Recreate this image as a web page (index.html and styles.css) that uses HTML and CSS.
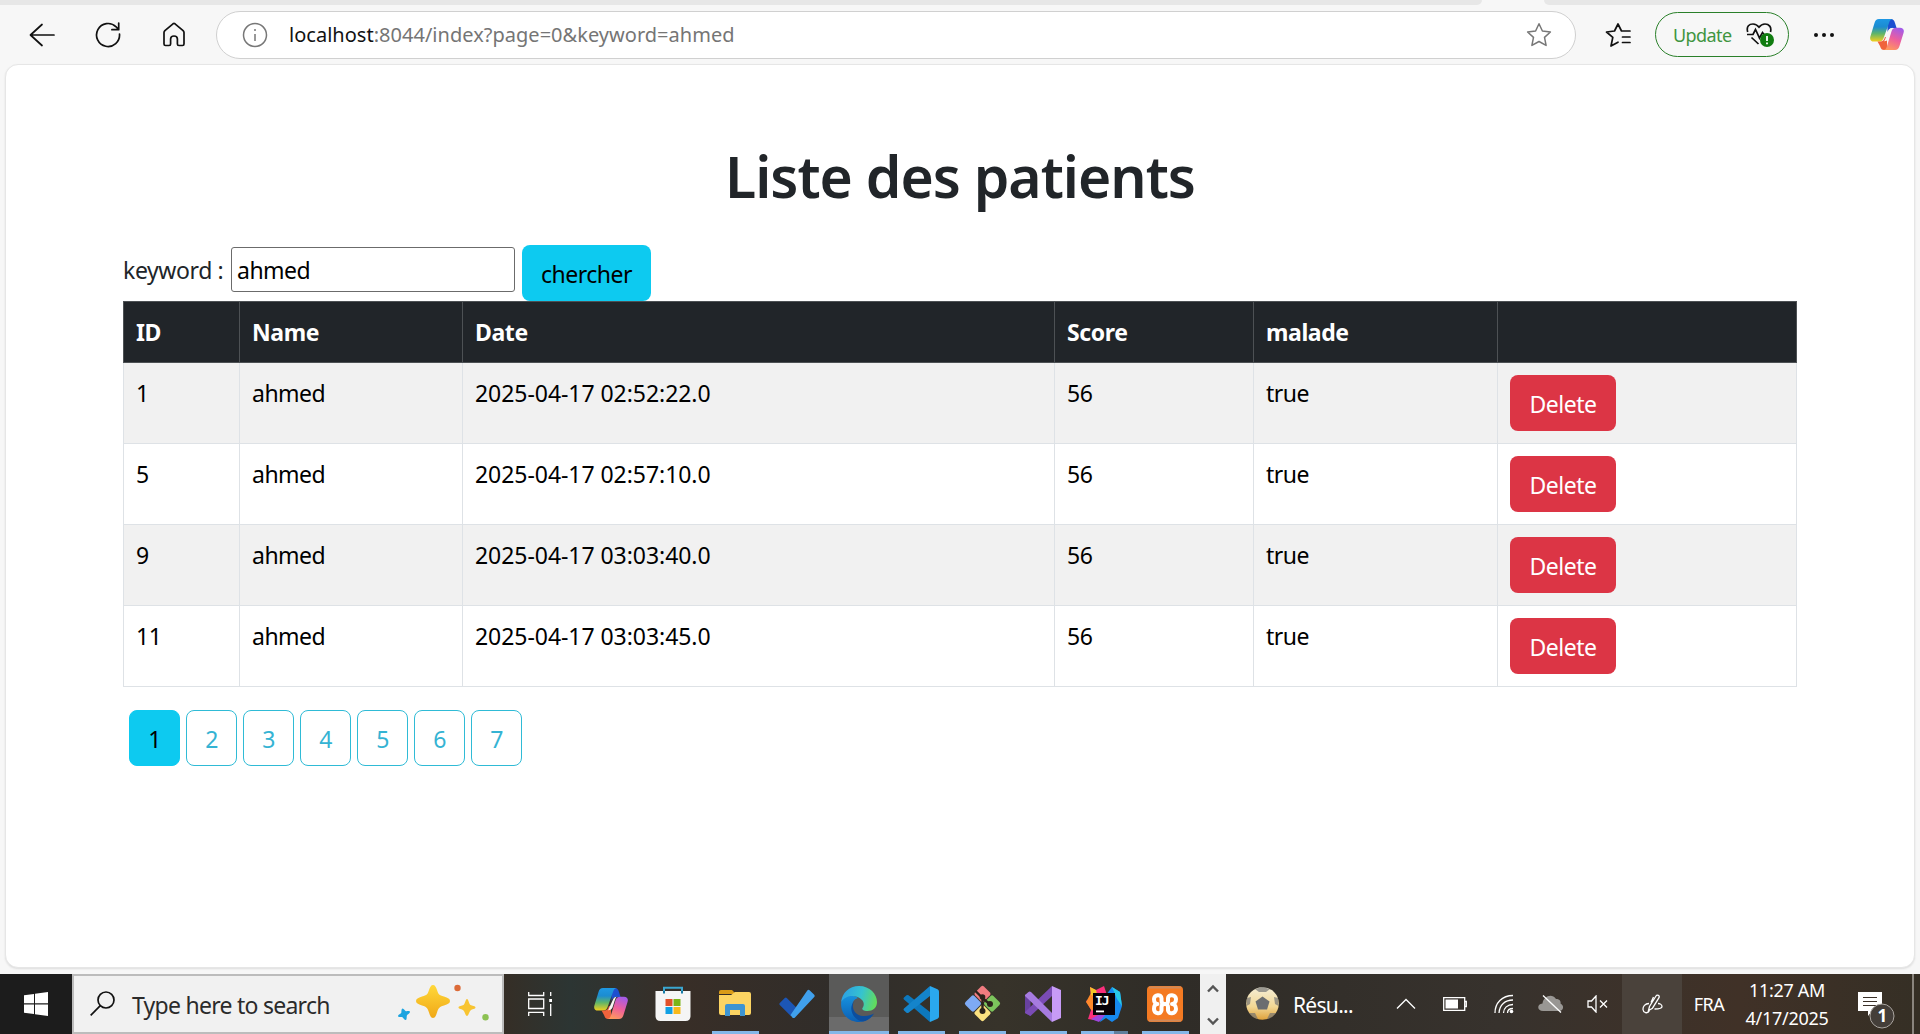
FILE: index.html
```html
<!DOCTYPE html>
<html lang="fr">
<head>
<meta charset="utf-8">
<title>Liste des patients</title>
<link rel="stylesheet" href="styles.css">
</head>
<body>
<svg class="defs" width="0" height="0" aria-hidden="true">
  <defs>
    <linearGradient id="cpBlue" x1="0" y1="0" x2="0" y2="1"><stop offset="0" stop-color="#1e98e4"/><stop offset=".35" stop-color="#1c8cd0"/><stop offset=".65" stop-color="#5fb56a"/><stop offset="1" stop-color="#f2cf1d"/></linearGradient>
    <linearGradient id="cpPink" x1=".7" y1="0" x2=".3" y2="1"><stop offset="0" stop-color="#a45be8"/><stop offset=".5" stop-color="#ee5f9c"/><stop offset="1" stop-color="#ff9a5c"/></linearGradient>
    <linearGradient id="gold" x1="0" y1="0" x2="0" y2="1"><stop offset="0" stop-color="#ffd83a"/><stop offset="1" stop-color="#f0a817"/></linearGradient>
    <linearGradient id="edgeTop" x1="0" y1=".3" x2="1" y2=".5"><stop offset="0" stop-color="#2b9fe6"/><stop offset=".55" stop-color="#36c3cf"/><stop offset="1" stop-color="#62dc5c"/></linearGradient>
    <linearGradient id="edgeLow" x1="0" y1="0" x2="0" y2="1"><stop offset="0" stop-color="#1792df"/><stop offset="1" stop-color="#0b5fb4"/></linearGradient>
    <linearGradient id="ballFill" x1="0" y1="0" x2="0" y2="1"><stop offset="0" stop-color="#f5eed6"/><stop offset=".6" stop-color="#f2d794"/><stop offset="1" stop-color="#dfa23c"/></linearGradient>
    <symbol id="copilot" viewBox="0 0 34 31">
      <path fill="#1d4fd0" d="M17 0h4c2 0 3 1 4 4l1.600 5h-4c-3 0-4 1-5 4z"/>
      <path fill="url(#cpBlue)" d="M9 0h14c-2 0-3 1-4 4l-5 14c-1 3-2 4.500-5 4.500H4c-3 0-4.500-2-3.600-5L4.500 4C5.300 1.500 6.500 0 9 0z"/>
      <path fill="#f0633c" d="M7.500 22.500H10c3 0 4-1.500 5-4.500l2 0v13h-3c-2 0-3-1-4-4z"/>
      <path fill="url(#cpPink)" d="M25 31H13c2 0 3.200-1 4-4l4.300-14c.9-3 2-4.300 5-4.300H30c3 0 4.500 2 3.600 5L29.500 27c-.8 2.500-2 4-4.500 4z"/>
      <path fill="#f8f5f4" d="M19.500 10.500q1-1.500 3-1.700-1 1-1.800 3.700l-2.200 7q-.8 2.500-4.500 2.700 1-1 1.800-3.700z"/>
    </symbol>
  </defs>
</svg>

<div class="screen">
  <div class="tabstrip"><span class="tab-left"></span><span class="tab-right"></span></div>

  <header class="toolbar">
    <svg class="nav-icon" width="26" height="26" viewBox="0 0 26 26"><path d="M25 13H1.500M13 2.500 1.500 13 13 23.500"/></svg>
    <svg class="nav-icon" width="26" height="26" viewBox="0 0 26 26"><path d="M24.500 12a11.500 11.500 0 1 1-3.400-7.200l2.400 2.700M23.700 1v6.700h-6.800"/></svg>
    <svg class="nav-icon" width="26" height="26" viewBox="0 0 26 26"><path d="M3 10.500c0-.8.300-1.300.9-1.900L12 1.800c.7-.5 1.300-.5 2 0l8.100 6.800c.6.600.9 1.100.9 1.900V22c0 1-.5 1.500-1.500 1.500h-3.600c-1 0-1.500-.500-1.500-1.500v-5c0-2-1-3-3.400-3s-3.400 1-3.400 3v5c0 1-.5 1.500-1.500 1.500H4.500C3.500 23.500 3 23 3 22z"/></svg>
    <div class="address">
      <svg class="info" width="26" height="26" viewBox="0 0 26 26"><circle cx="13" cy="13" r="11.500"/><path d="M13 12v7M13 7v2"/></svg>
      <span class="url"><b>localhost</b>:8044/index?page=0&amp;keyword=ahmed</span>
      <svg class="star" width="26" height="26" viewBox="0 0 26 26"><path d="M13 1.800 16.400 9l8 1-5.900 5.400 1.600 8L13 19.500l-7.100 3.900 1.600-8L1.600 10l8-1z"/></svg>
    </div>
    <svg class="nav-icon favs" width="26" height="26" viewBox="0 0 26 26"><path d="M13 20.200 6 24l1.800-8.700L1.500 10l8-1L13 2l3.500 7H25M17.500 15H25M17.500 20.500H25"/></svg>
    <button class="update">Update
      <svg width="29" height="26" viewBox="0 0 29 26"><g fill="none" stroke="#111" stroke-width="1.700"><path d="M1.700 10C0 4 3.500 2 7 2c2.500 0 4.500 1.200 6 3.200C14.500 3.200 16.500 2 19 2c4 0 6.800 3 5.500 8M1 12.500h6l2.500-5 4 8.500 3-5.500 1.500 2M5.500 15.500l7 6.500"/></g><circle cx="21" cy="18" r="7" fill="#107c10"/><path d="M21 14v5M21 20.500v1.800" stroke="#fff" stroke-width="1.800"/></svg>
    </button>
    <svg class="dots" width="20" height="6" viewBox="0 0 20 6"><circle cx="2" cy="3" r="2"/><circle cx="10" cy="3" r="2"/><circle cx="18" cy="3" r="2"/></svg>
    <svg class="copilot-side" width="34" height="31"><use href="#copilot"/></svg>
  </header>

  <main class="page">
    <h1>Liste des patients</h1>
    <form class="search">
      <label for="kw">keyword :</label>
      <input id="kw" type="text" value="ahmed">
      <button type="button" class="btn btn-info">chercher</button>
    </form>
    <table>
      <colgroup><col class="c-id"><col class="c-name"><col class="c-date"><col class="c-score"><col class="c-mal"><col class="c-act"></colgroup>
      <thead><tr><th>ID</th><th>Name</th><th>Date</th><th>Score</th><th>malade</th><th></th></tr></thead>
      <tbody>
        <tr><td>1</td><td>ahmed</td><td class="date">2025-04-17 02:52:22.0</td><td>56</td><td>true</td><td><a class="btn btn-danger">Delete</a></td></tr>
        <tr><td>5</td><td>ahmed</td><td class="date">2025-04-17 02:57:10.0</td><td>56</td><td>true</td><td><a class="btn btn-danger">Delete</a></td></tr>
        <tr><td>9</td><td>ahmed</td><td class="date">2025-04-17 03:03:40.0</td><td>56</td><td>true</td><td><a class="btn btn-danger">Delete</a></td></tr>
        <tr><td>11</td><td>ahmed</td><td class="date">2025-04-17 03:03:45.0</td><td>56</td><td>true</td><td><a class="btn btn-danger">Delete</a></td></tr>
      </tbody>
    </table>
    <nav class="pages">
      <a class="btn btn-page current">1</a><a class="btn btn-page">2</a><a class="btn btn-page">3</a><a class="btn btn-page">4</a><a class="btn btn-page">5</a><a class="btn btn-page">6</a><a class="btn btn-page">7</a>
    </nav>
  </main>

  <footer class="taskbar">
    <div class="start"><svg width="24" height="24" viewBox="0 0 24 24" fill="#fff"><path d="M0 3.200 10 1.900v9.400H0zM11 1.700 24 0v11.300H11zM0 12.400h10v9.600L0 20.800zM11 12.400h13V24l-13-1.800z"/></svg></div>
    <div class="taskbar-search">
      <svg width="25" height="25" viewBox="0 0 25 25" fill="none" stroke="#111" stroke-width="1.700"><circle cx="16" cy="9" r="8"/><path d="M10.300 14.700.7 24.300"/></svg>
      <span>Type here to search</span>
      <svg class="sparkles" width="92" height="38" viewBox="0 0 92 38"><path fill="url(#gold)" d="M35 2c2 0 3 2 4 5 1.500 4.500 2 5 7 6.500 4 1.200 6 2.500 6 4.500s-2 3.300-6 4.500c-5 1.500-5.500 2.500-7 7-1 3.500-2 5.500-4 5.500s-3-2-4-5.500c-1.500-4.500-2-5.500-7-7-4-1.200-6-2.500-6-4.500s2-3.300 6-4.500c5-1.500 5.500-2 7-6.500 1-3 2-5 4-5z"/><path fill="#f8c431" d="M69 16c1.500 0 2 5 3.500 6s5 1 5 2.500-3.500 1.500-5 3-2 5.500-3.500 5.500-2-4-3.500-5.500-5-1.500-5-3 3.500-1.500 5-2.500 2-6 3.500-6z"/><path fill="#1ca4e0" d="M4.500 25.500c1-.5 2.500 2.500 3.500 2.700s4-.7 4 .8-3 2.500-3.200 3.800.2 4.500-1.300 4.200-2.500-2.700-3.500-3-4 .5-4-1 3-2.200 3.300-3.200-.3-3.800 1.200-4.300z"/><circle cx="59.500" cy="5" r="3.200" fill="#dc6b38"/><circle cx="87.500" cy="34.300" r="3.200" fill="#8cc152"/></svg>
    </div>

    <div class="task-view"><svg width="24" height="24" viewBox="0 0 24 24" fill="none" stroke="#fff" stroke-width="1.300"><path d="M.7 0v3.500h15V0M.7 7h15v9.500H.7zM.7 24v-3.600h15V24M22.700 0v4M22.700 12v12"/><path d="M21.200 7h3v3h-3z" fill="#fff" stroke="none"/></svg></div>

    <div class="apps apps-a">
      <div class="app"><svg width="34" height="31"><use href="#copilot"/></svg></div>
      <div class="app"><svg width="36" height="36" viewBox="0 0 36 36"><path d="M9 8V1.800h18V8" fill="none" stroke="#3aa6d0" stroke-width="2"/><path d="M.5 5h35v25q0 5-5 5h-25q-5 0-5-5z" fill="#f5f5f5"/><path d="M9 5v2.500M27 5v2.500" stroke="#187ca8" stroke-width="2"/><path fill="#e1512a" d="M10.500 13h7v7h-7z"/><path fill="#7ab518" d="M18.500 13h7v7h-7z"/><path fill="#11a0e4" d="M10.500 21h7v7h-7z"/><path fill="#f8b91b" d="M18.500 21h7v7h-7z"/></svg></div>
      <div class="app running"><svg width="32" height="28" viewBox="0 0 32 28"><path fill="#d99b18" d="M0 2q0-2 2-2h11l4 4H0z"/><path fill="#fcd462" d="M0 5h12l4-3h14q2 0 2 2v19q0 2-2 2H2q-2 0-2-2z"/><path fill="#3d94d1" d="M6 26V16q0-2 2-2h16q2 0 2 2v10h-5v-6H11v6z"/></svg></div>
      <div class="app"><svg width="36" height="30" viewBox="0 0 36 30"><path fill="#1c56b5" d="m.8 14 5-5q1-1 2 0l11 11-7 7L.8 16q-1-1 0-2z"/><path fill="#40a0ec" d="M11.500 26 28.300 1.600q1.200-1.400 2.500-.2l4.200 4.200q1.300 1.300.2 2.500L16 28.400q-1.400 1.300-2.700 0z"/></svg></div>
      <div class="app running active"><svg width="36" height="36" viewBox="0 0 36 36"><path fill="url(#edgeLow)" d="M.2 16C2 8 11 8 17 12c-4 1-6 4-5.500 8.500C12 28 19 34 27 33c-3 2-6 3-9 3C7 36-1 27 .2 16z"/><path fill="#0c4e9e" d="M14 14.500c-5 5-1 15 8 15.500 5 .3 8-1 11-2.500-3 5-7 7.500-11 8-10-1-16-14-8-21z"/><path fill="url(#edgeTop)" d="M.2 16C1 7 8 0 18 0c11 0 18 8 18 16 0 6-4.500 9-9.500 9-4 0-6-1.500-5-3 2-2.500 1.500-6-.5-8C16 8.500 5 8 .2 16z"/></svg></div>
      <div class="app running"><svg width="36" height="36" viewBox="0 0 36 36"><path fill="#0d78bd" d="m1 11.500 2.500-2.200q1-.8 2 0L27 26v10L1 13.500q-1-1 0-2z"/><path fill="#1484cb" d="m1 24.500 2.500 2.200q1 .8 2 0L27 10V0L1 22.500q-1 1 0 2z"/><path fill="#2aa8ee" d="m27 0 7.500 3.200q1.500.7 1.500 2.300v25q0 1.600-1.500 2.300L27 36z"/></svg></div>
    </div>
    <div class="apps apps-b">
      <div class="app running"><svg width="37" height="37" viewBox="0 0 37 37"><g transform="rotate(45 18.500 18.500)"><rect x="5.500" y="5.500" width="12.500" height="12.500" rx="2" fill="#f07c80"/><rect x="19" y="5.500" width="12.500" height="12.500" rx="2" fill="#7cc45c"/><rect x="5.500" y="19" width="12.500" height="12.500" rx="2" fill="#7eaaf4"/><rect x="19" y="19" width="12.500" height="12.500" rx="2" fill="#fbe180"/></g><path d="M11.500 6 18.500 13v12M18.500 13l7 6" stroke="#2c231c" stroke-width="2.400" fill="none"/><g fill="#2c231c"><circle cx="18.500" cy="12" r="2.800"/><circle cx="18.500" cy="26" r="3"/><circle cx="26" cy="19" r="3"/></g></svg></div>
      <div class="app running"><svg width="36" height="36" viewBox="0 0 36 36"><path fill="#68419f" d="M0 9 5.500 6v24L0 27z"/><path fill="#7a4cb5" d="M5.500 30 27 10V0L0 26v1z"/><path fill="#a67be0" d="M0 9 3.500 6q1-.8 2.500 0L27 27v9L0 10z"/><path fill="#c79bf6" d="m27 0 9 4v28l-9 4z"/></svg></div>
      <div class="app running stacked"><svg width="36" height="36" viewBox="0 0 36 36"><path fill="#fc2f7c" d="m4 1 6 3 8-4 4 12-8 23-12-2 3-9-5-9 5-3z"/><path fill="#ff8a2a" d="M0 16 5 7l9 5-8 13z"/><path fill="#f6c427" d="m4 1 6 3 2 8-7-3z"/><path fill="#1688ef" d="m20 9 6-8 8 5 2 14-4 12-6 4-6-4-6 4z"/><path fill="#28c9e8" d="m26 1 8 5 2 14-5-7z"/><path fill="#9d48df" d="m12 29 8-1-7 8-8-3z"/><path d="M7 7h22v22H7z" fill="#080208"/><path d="M10 24.500h8v1.800h-8z" fill="#fff"/><text class="ij" x="9" y="18.500">IJ</text></svg></div>
      <div class="app running"><svg width="36" height="36" viewBox="0 0 36 36"><rect width="36" height="36" rx="4" fill="#f47a22"/><path d="M2 1.500h32M2 34.500h32" stroke="#d08a5a" stroke-width="2"/><path d="M14.500 12.500c0-5-7.500-4-7.500.5 0 3 1.500 5 3.500 5-2.500 0-3.500 2-3.500 5 0 5 7.500 6 7.500 1M21 12.500c0-5 8-4 8 .5 0 3-1.500 5-4 5 2.500 0 4 2 4 5 0 5-8 6-8 1M14.500 12v3q0 3 3.300 3t3.200-3v-3M14.500 24.500V21q0-3 3.300-3t3.200 3v3.500" fill="none" stroke="#fff" stroke-width="4" stroke-linecap="round" stroke-linejoin="round"/></svg></div>
    </div>
    <div class="scroller">
      <svg width="12" height="9" viewBox="0 0 12 9"><path d="m1 7.500 5-5 5 5"/></svg>
      <svg width="12" height="9" viewBox="0 0 12 9"><path d="m1 1.500 5 5 5-5"/></svg>
    </div>

    <div class="news"><svg width="33" height="33" viewBox="0 0 33 33"><circle cx="16.500" cy="16.500" r="16.300" fill="url(#ballFill)"/><g fill="#6b6d70"><path d="m16.500 9.500 7 5-2.500 8h-9l-2.500-8z"/><path opacity=".65" d="m9 2 7.500-2L24 2l-4 3h-7zM1 11l4-1-1 7-3.500 2zM32 11l-4-1 1 7 3.500 2zM3 26l6 0 3 6q-6-1-9-6zM30 26l-6 0-3 6q6-1 9-6z"/></g></svg><span>Résu...</span></div>
    <div class="tray t-chev"><svg width="20" height="12" viewBox="0 0 20 12"><path d="m1 10.500 9-9 9 9"/></svg></div>
    <div class="tray t-batt"><svg width="24" height="14" viewBox="0 0 24 14"><path d="M.7.700h21v12.600H.7zM22 4.500h1.300v5H22"/><path d="M2.500 2.500H15v9H2.500z" fill="#fff" stroke="none"/></svg></div>
    <div class="tray t-wifi"><svg width="20" height="20" viewBox="0 0 20 20"><path d="M1 19C1 9 8 1.500 19 1.500M5 19C5.500 11 11 6 19 6M9.500 19c0-5 4-8.500 9.500-8.500M13.500 19c0-3 2.300-4.500 5.500-4.500"/><circle cx="17.500" cy="17.500" r="1.800" fill="#fff" stroke="none"/></svg></div>
    <div class="tray t-cloud"><svg width="25" height="20" viewBox="0 0 25 20"><path fill="#999794" stroke="none" d="M5 17c-6 0-6.500-7-.5-7.500C5.500 2 14-1 18 5c4 0 5 2.500 4.500 4.500C27 12 25 17 21 17z"/><path d="m5 1.500 18 17"/></svg></div>
    <div class="tray t-vol"><svg width="21" height="18" viewBox="0 0 21 18"><path d="M1 6h3.500l4.500-5v16l-4.500-5H1zM13 5.500l7 7M20 5.500l-7 7"/></svg></div>
    <div class="tray t-pen"><svg width="21" height="21" viewBox="0 0 21 21"><path d="m6.500 16.500 1-4L14 2c1.200-1.800 4-.3 3 1.700l-6.500 10.500zM7 9.500C3 9.500.8 12.500 1 15.500s4.500 5 6.500 1M9 8.500 11.500 3M12.500 15c4 0 7.500-.5 7.500-2.500S17.500 9.500 16 9.500"/></svg></div>
    <div class="lang">FRA</div>
    <div class="clock"><span class="time">11:27 AM</span><span class="day">4/17/2025</span></div>
    <div class="notif">
      <svg width="38" height="37" viewBox="0 0 38 37"><path fill="#fff" d="M0 0h24v19H14l-4 5v-5H0z"/><path d="M5 5.500h14M5 9.500h14M5 13.500h14" stroke="#3b3027" stroke-width="1.200"/><circle cx="24" cy="24" r="12" fill="#443e39" stroke="#aaa5a0"/><text class="count" x="24" y="30" text-anchor="middle">1</text></svg>
    </div>
    <div class="peek"></div>
  </footer>
</div>
</body>
</html>
```
FILE: styles.css
```css
* { box-sizing: border-box; }
body {
  margin: 0;
  overflow: hidden;
  font-family: "Noto Sans", "Open Sans", sans-serif;
  font-size: 23px;
  line-height: 36px;
  letter-spacing: -0.5px;
  color: #212529;
}
svg { display: block; flex: none; }
.defs { position: absolute; }
.screen { width: 1920px; height: 1034px; display: flex; flex-direction: column; background: #f7f7f7; }

/* browser chrome */
.tabstrip { height: 5px; display: flex; justify-content: space-between; flex: none; }
.tabstrip span { background: #e7e7e7; }
.tab-left { width: 1482px; border-bottom-right-radius: 6px; }
.tab-right { width: 376px; border-bottom-left-radius: 6px; }
.toolbar { height: 59px; flex: none; display: flex; align-items: center; padding-left: 29px; }
.nav-icon { fill: none; stroke: #111; stroke-width: 1.700; stroke-linecap: round; stroke-linejoin: round; margin-right: 40px; }
.address {
  width: 1360px; height: 48px; margin-left: -11px;
  border: 1.500px solid #d0d0d0; border-radius: 24px; background: #fff;
  display: flex; align-items: center; padding: 0 23px 0 25px;
}
.info, .star { fill: none; stroke: #777; stroke-width: 1.500; stroke-linejoin: round; }
.url { flex: 1; margin-left: 21px; padding-top: 1px; font-size: 20px; letter-spacing: 0.020px; color: #757575; }
.url b { font-weight: 400; color: #111; }
.favs { margin: 0 24px 0 29px; }
.update {
  width: 134px; height: 45px; flex: none; padding: 0 13px 0 17px;
  border: 1.500px solid #2a802a; border-radius: 23px; background: #f7f7f7;
  display: flex; align-items: center; justify-content: space-between;
  font: 18px "Noto Sans", sans-serif; letter-spacing: -0.600px; color: #3f953f;
}
.dots { margin: 0 36px 0 25px; fill: #111; }

/* document */
.page {
  width: 1910px; height: 904px; margin: 0 0 0 5px; flex: none;
  padding: 75px 117px 0;
  background: #fff; border: 1px solid #e6e6e6; border-radius: 13px;
  box-shadow: 0 1px 2px #ddd;
}
h1 { margin: 0; font-size: 57px; line-height: 72px; font-weight: 600; letter-spacing: -1px; text-align: center; }
.search { display: flex; align-items: flex-start; height: 56px; margin-top: 33px; }
.search label { width: 108px; padding-top: 7px; letter-spacing: -0.400px; }
.search input {
  width: 284px; height: 45px; margin: 2px 7px 0 0; padding: 0 5px;
  border: 1px solid #6b6b6b; border-radius: 3px; background: #fff; color: #000;
  font: inherit; letter-spacing: inherit;
}
.btn {
  display: block; height: 56px; padding: 10px 0 8px; border: 1px solid transparent; border-radius: 8px;
  font: inherit; letter-spacing: inherit; text-align: center;
}
.btn-info { width: 129px; background: #0dcaf0; color: #000; }
.btn-danger { width: 106px; background: #dc3545; color: #fff; }
table { width: 1674px; table-layout: fixed; border-collapse: collapse; color: #000; }
.c-id { width: 116px; }
.c-name { width: 223px; }
.c-date { width: 592px; }
.c-score { width: 199px; }
.c-mal { width: 244px; }
th, td { text-align: left; vertical-align: top; padding: 12px 12px 11px; border: 1px solid #dee2e6; }
th { height: 61px; background: #212529; color: #fff; border-color: #4d5154; font-weight: 700; letter-spacing: -0.400px; }
td { height: 81px; }
.date { letter-spacing: -0.050px; }
tbody tr:nth-child(odd) { background: #f1f1f1; }
.pages { display: flex; gap: 6px; margin: 23px 0 0 6px; }
.btn-page { width: 51px; border-color: #2fbbd6; color: #35b3d3; }
.current { background: #0dcaf0; border-color: #0dcaf0; color: #000; }

/* taskbar */
.taskbar {
  height: 60px; margin-top: auto; flex: none; display: flex; align-items: stretch;
  background: linear-gradient(90deg, #352e26 0, #352e26 504px, #2c3533 570px, #382e27 680px, #302d2a 850px, #37332a 1000px, #2f2c27 1180px, #37322d 1500px, #403127 1740px, #352f25 1920px);
  color: #fff;
}
.start { width: 72px; background: #1c1c1c; padding: 18px 24px; }
.taskbar-search {
  width: 432px; border: 2px solid #bcbcbc; background: #f1f1f1; color: #2b2b2b;
  display: flex; align-items: center; padding: 0 12px 0 16px; letter-spacing: -0.740px;
}
.taskbar-search svg { margin-top: -2px; }
.taskbar-search .sparkles { margin-top: -4px; }
.taskbar-search span { flex: 1; margin-left: 17px; padding-top: 2px; white-space: nowrap; }
.task-view { width: 77px; padding: 18px 24px; }
.apps { display: flex; }
.apps-a { gap: 2px; }
.apps-b { gap: 1px; margin-left: 1px; }
.app { width: 60px; padding-bottom: 1px; display: flex; align-items: center; justify-content: center; }
.running { background: linear-gradient(#84b7e8, #84b7e8) center bottom / 47px 3px no-repeat; }
.active { background: linear-gradient(#84b7e8, #84b7e8) center bottom / 60px 3px no-repeat, linear-gradient(#5a5a59 43px, #6b6b6b 43px); }
.stacked { background-image: linear-gradient(90deg, #84b7e8 33px, #5f7f9c 33px); }
.ij { font: 700 13px "DejaVu Sans Mono", monospace; fill: #fff; letter-spacing: -1px; }
.scroller { width: 26px; margin-left: 5px; padding: 10px 0 8px; background: #f0f0f0; display: flex; flex-direction: column; align-items: center; justify-content: space-between; }
.scroller path { fill: none; stroke: #555; stroke-width: 2.400; }
.news { width: 154px; display: flex; align-items: center; padding: 0 0 2px 20px; }
.news span { margin-left: 14px; padding-top: 4px; font-size: 21px; letter-spacing: -0.700px; }
.tray { display: flex; align-items: center; justify-content: center; }
.tray svg { fill: none; stroke: #fff; stroke-width: 1.300; }
.t-chev { width: 51px; }
.t-batt { width: 48px; }
.t-wifi { width: 49px; }
.t-cloud { width: 44px; }
.t-vol { width: 50px; }
.t-pen { width: 60px; background: #4a423b; }
.lang { width: 54px; padding-top: 12px; text-align: center; font-size: 18px; }
.clock { width: 102px; padding-top: 2px; display: flex; flex-direction: column; align-items: center; font-size: 18px; line-height: 28px; letter-spacing: -0.300px; }
.notif { width: 74px; padding: 18px 0 0 20px; }
.count { font: 700 17px "Noto Sans", sans-serif; fill: #fff; }
.peek { width: 2px; background: #8a857e; }
```
